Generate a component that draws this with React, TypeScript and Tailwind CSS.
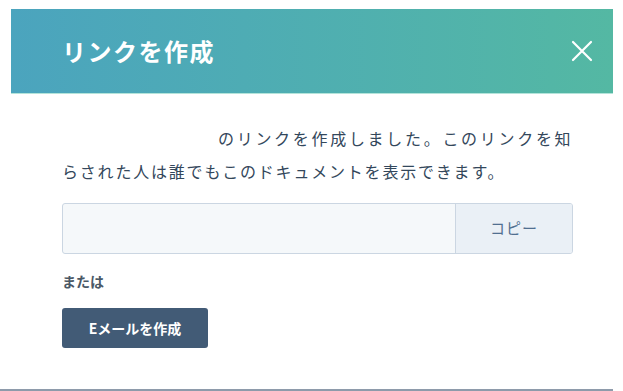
import React from "react";

const CloseIcon = () => (
  <svg width="22" height="22" viewBox="0 0 22 22" fill="none">
    <path d="M2 2L20 20M20 2L2 20" stroke="white" strokeWidth="2.2" strokeLinecap="round" />
  </svg>
);

const App = () => {
  return (
    <div
      className="w-[623px] h-[391px] bg-white flex flex-col overflow-hidden"
      style={{ fontFamily: '"Noto Sans CJK JP", "Noto Sans", sans-serif' }}
    >
      <div className="pt-[9px] pl-[11px] w-[613px]">
        {/* Header */}
        <div className="h-[85px] bg-gradient-to-r from-[#4ba4be] to-[#54b8a3] border-b border-[#b4e4da] flex items-center justify-between pl-[51px] pr-[20px]">
          <h1 className="text-white text-[24px] font-bold tracking-[1.5px] leading-none">リンクを作成</h1>
          <CloseIcon />
        </div>

        {/* Body */}
        <div className="pl-[51px] pt-[28px] text-[#33475b]">
          <p className="text-[16px] leading-[33px] tracking-[1.8px] whitespace-nowrap">
            <span className="inline-block w-[156px]"></span>
            <span className="tracking-[2.7px]">のリンクを作成しました。このリンクを知</span>
            <br />
            らされた人は誰でもこのドキュメントを表示できます。
          </p>

          <div className="mt-[15px] w-[511px] h-[51px] flex rounded-[3px] border border-[#cbd6e2] bg-[#f5f8fa] overflow-hidden">
            <div className="flex-1"></div>
            <button className="w-[117px] h-full border-l border-[#cbd6e2] bg-[#eaf0f6] text-[#516f90] text-[15px] tracking-[1px]">
              コピー
            </button>
          </div>

          <p className="mt-[17px] text-[14px] font-bold leading-[20px] text-[#4a5866]">または</p>

          <button className="mt-[17px] w-[146px] h-[40px] rounded-[3px] bg-[#425b76] text-white text-[14px] font-bold">
            Eメールを作成
          </button>
        </div>
      </div>
      <div className="flex-1"></div>
      <div className="w-[613px] h-[2px] bg-[#8e9bab]"></div>
    </div>
  );
};

export default App;
